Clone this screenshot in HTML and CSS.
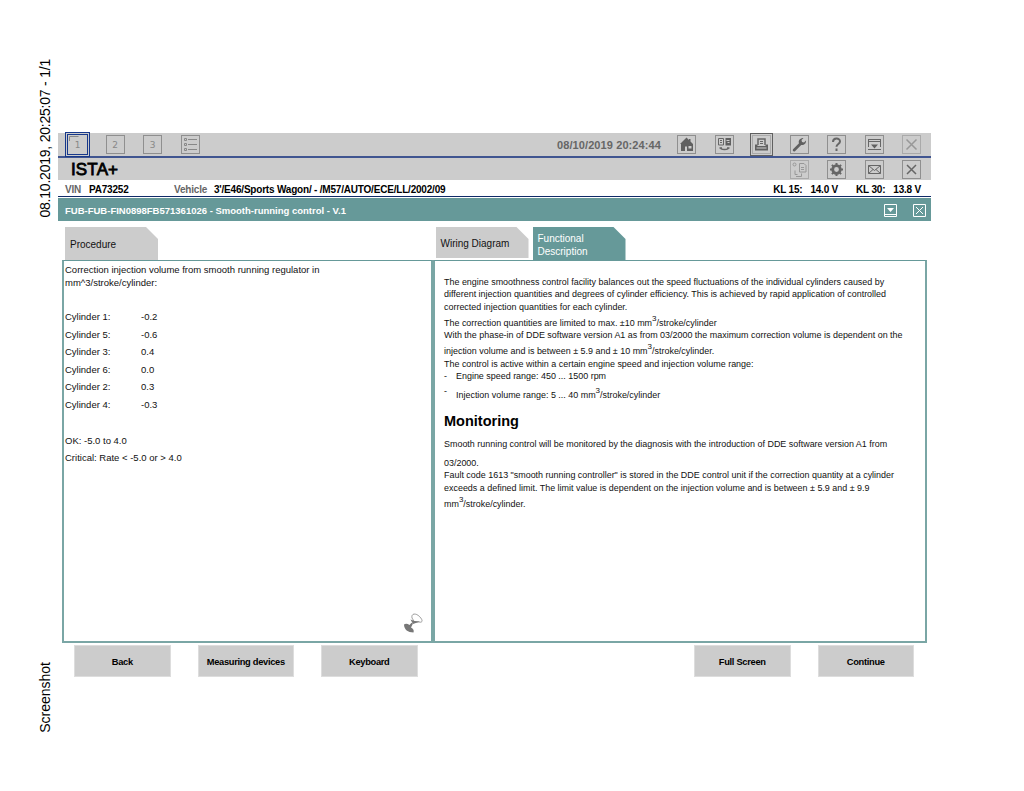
FILE: index.html
```html
<!DOCTYPE html>
<html lang="en">
<head>
  <meta charset="utf-8">
  <title>ISTA+</title>
  <link rel="stylesheet" href="styles.css">
</head>
<body>
  <div class="margin-notes">
    <div class="note note-date">08.10.2019, 20:25:07 - 1/1</div>
    <div class="note note-title">Screenshot</div>
  </div>

  <div class="app">
    <div class="toolbar">
      <div class="icons icons-left">
        <span class="icon selected"><svg viewBox="0 0 19 19"><path d="M2.500 7V2.500h9" /></svg><b>1</b></span>
        <span class="icon">2</span>
        <span class="icon">3</span>
        <span class="icon"><svg viewBox="0 0 19 19"><path d="M7 4.500h9M7 9.500h9M7 14.500h9" /><path d="M3.500 3.500h2v2h-2zM3.500 8.500h2v2h-2zM3.500 13.500h2v2h-2z" /></svg></span>
      </div>
      <div class="clock">08/10/2019 20:24:44</div>
      <div class="icons">
        <span class="icon"><svg viewBox="0 0 19 19"><path class="fill" fill-rule="evenodd" d="M9.500 2.500L3 9h1v7h4v-4.500h2V16h6V9L13.500 6.500V4H12v1zM11.500 11h3v2.500h-3z" /></svg></span>
        <span class="icon"><svg viewBox="0 0 19 19"><path class="fill" d="M10.500 3H16v7.500h-5.500z" /><path d="M3.500 3.500h5v6.500h-5zM5 5.500h2M5 7.500h2" /><path class="light" d="M11.500 5.500h3M12.500 7.500h2" /><path class="thick" d="M5.500 12.500c0 2.700 8 2.700 8 0M4.500 13h2.500M12 13h2.500" /></svg></span>
        <span class="icon framed"><svg viewBox="0 0 19 19"><path class="thick" d="M6 10V4h7v6" /><path d="M8 6.500h3M8 8.500h3" /><path class="fill" fill-rule="evenodd" d="M3 9.500h2.500V11h8V9.500H16V15.500H3zM4.500 12.500h10v1h-10z" /></svg></span>
        <span class="icon"><svg viewBox="0 0 19 19"><path class="fill" d="M3 14.200L9 8.300C8 5.500 10 3 13.500 3L11.500 5l.5 2 2 .5 2-2c.3 3-2 5-4.800 4.500L5 16.200c-1.500.8-2.800-.6-2-2z" /></svg></span>
        <span class="icon"><svg viewBox="0 0 19 19"><path class="heavy" d="M6 7c0-4.500 7-4.500 7-.5 0 2.500-3.500 2.500-3.500 5.300M9.500 13.500V16" /></svg></span>
        <span class="icon"><svg viewBox="0 0 19 19"><path d="M3.500 12V4M15.500 12V4M3 4.500h13M3 6.500h13M3 14.500h13" /><path class="fill" d="M6 9.500h7l-3.500 4z" /></svg></span>
        <span class="icon faded"><svg viewBox="0 0 19 19"><path class="thick" d="M4.500 4.500l10 10M14.500 4.500l-10 10" /></svg></span>
      </div>
    </div>

    <div class="titlebar">
      <h1>ISTA+</h1>
      <div class="icons">
        <span class="icon faded"><svg viewBox="0 0 19 19"><path d="M9.500 3.500H14l2 2V12H9.500zM11 7.500h3M11 9.500h3M5 10.500v4h2.500M6 16.500h5.500V13.500" /><circle cx="4.500" cy="4.500" r="1.500" /></svg></span>
        <span class="icon"><svg viewBox="0 0 19 19"><circle class="gear" cx="9.500" cy="9.500" r="3.800" /><path class="teeth" d="M9.500 3v2.500M9.500 13.500V16M3 9.500h2.500M13.500 9.500H16M4.900 4.900l2 2M12.100 12.100l2 2M4.900 14.100l2-2M12.100 6.900l2-2" /></svg></span>
        <span class="icon"><svg viewBox="0 0 19 19"><path d="M3.500 5.500h12v8h-12zM3.500 5.500l6 5 6-5M3.500 13.500l4.500-4M15.500 13.500l-4.500-4" /></svg></span>
        <span class="icon"><svg viewBox="0 0 19 19"><path class="thick" d="M5 5l9 9M14 5l-9 9" /></svg></span>
      </div>
    </div>

    <div class="vehicle-row">
      <span class="label vin-label">VIN</span>
      <span class="vin">PA73252</span>
      <span class="label vehicle-label">Vehicle</span>
      <span class="vehicle">3'/E46/Sports Wagon/ - /M57/AUTO/ECE/LL/2002/09</span>
      <span class="voltage"><span>KL 15:</span><span>14.0 V</span></span>
      <span class="voltage"><span>KL 30:</span><span>13.8 V</span></span>
    </div>

    <div class="module-bar">
      <span class="module-name">FUB-FUB-FIN0898FB571361026 - Smooth-running control - V.1</span>
      <svg class="window-icon" viewBox="0 0 13 13"><path d="M.5.5h12v12H.5zM1 10.500h11" /><path class="solid" d="M3 4h7L6.500 8z" /></svg>
      <svg class="window-icon" viewBox="0 0 13 13"><path d="M.5.5h12v12H.5zM3 3l7 7M10 3l-7 7" /></svg>
    </div>

    <div class="columns">
      <div class="column column-left">
        <div class="tabs">
          <div class="tab">Procedure</div>
        </div>
        <div class="panel procedure">
          <p>Correction injection volume from smooth running regulator in<br>mm^3/stroke/cylinder:</p>
          <dl>
            <dt>Cylinder 1:</dt><dd>-0.2</dd>
            <dt>Cylinder 5:</dt><dd>-0.6</dd>
            <dt>Cylinder 3:</dt><dd>0.4</dd>
            <dt>Cylinder 6:</dt><dd>0.0</dd>
            <dt>Cylinder 2:</dt><dd>0.3</dd>
            <dt>Cylinder 4:</dt><dd>-0.3</dd>
          </dl>
          <div class="limits">OK: -5.0 to 4.0<br>Critical: Rate &lt; -5.0 or &gt; 4.0</div>
          <svg class="dish" viewBox="0 0 20 20">
            <path class="dish-base" d="M1 11.500c0 5 4 8 9.500 8 .8-2-.2-4-2.500-5l2-4-1.500-.7-2 2.200c-2-1.300-4-1.500-5.500-.5z" />
            <path class="dish-base" d="M7.500 6.500l2.500 4.500L17 8.500l-5.500-.5z" />
            <path class="dish-rim" d="M9 5c-1-5 4-5 7.500-1.500C20 7 20 10 16 9M9 5l2.500 4 4.500 0" />
          </svg>
        </div>
      </div>

      <div class="column column-right">
        <div class="tabs">
          <div class="tab short">Wiring Diagram</div>
          <div class="tab active">Functional<br>Description</div>
        </div>
        <div class="panel description">
          <p>The engine smoothness control facility balances out the speed fluctuations of the individual cylinders caused by</p>
          <p>different injection quantities and degrees of cylinder efficiency. This is achieved by rapid application of controlled</p>
          <p>corrected injection quantities for each cylinder.</p>
          <p class="raised">The correction quantities are limited to max. ±10 mm<sup>3</sup>/stroke/cylinder</p>
          <p>With the phase-in of DDE software version A1 as from 03/2000 the maximum correction volume is dependent on the</p>
          <p class="raised">injection volume and is between ± 5.9 and ± 10 mm<sup>3</sup>/stroke/cylinder.</p>
          <p>The control is active within a certain engine speed and injection volume range:</p>
          <ul>
            <li><span>-</span>Engine speed range: 450 ... 1500 rpm</li>
            <li class="tall"><span>-</span>Injection volume range: 5 ... 40 mm<sup>3</sup>/stroke/cylinder</li>
          </ul>
          <h2>Monitoring</h2>
          <p>Smooth running control will be monitored by the diagnosis with the introduction of DDE software version A1 from</p>
          <p class="spaced">03/2000.</p>
          <p>Fault code 1613 "smooth running controller" is stored in the DDE control unit if the correction quantity at a cylinder</p>
          <p>exceeds a defined limit. The limit value is dependent on the injection volume and is between ± 5.9 and ± 9.9</p>
          <p class="raised">mm<sup>3</sup>/stroke/cylinder.</p>
        </div>
      </div>
    </div>

    <div class="actions">
      <button>Back</button>
      <button>Measuring devices</button>
      <button>Keyboard</button>
      <button class="push">Full Screen</button>
      <button>Continue</button>
    </div>
  </div>
</body>
</html>
```
FILE: styles.css
```css
* {
  box-sizing: border-box;
}

body {
  width: 1024px;
  height: 791px;
  margin: 0;
  display: flex;
  overflow: hidden;
  background: #fff;
  color: #111;
  font-family: "Liberation Sans", Arial, sans-serif;
}

h1, h2, p, ul, dl, dd {
  margin: 0;
  padding: 0;
}

.margin-notes {
  width: 58px;
  padding: 59px 0 58px 38px;
  display: flex;
  flex-direction: column;
  justify-content: space-between;
}

.note {
  writing-mode: vertical-rl;
  transform: rotate(180deg);
  width: 15px;
  color: #000;
  font-size: 14px;
  line-height: 15px;
  white-space: nowrap;
}

.note-date {
  letter-spacing: -.22px;
}

.app {
  width: 873px;
  padding-top: 133px;
}

/* Top bars */
.toolbar,
.titlebar {
  display: flex;
  align-items: center;
  justify-content: flex-end;
  padding-right: 10px;
  background: #ccc;
}

.toolbar {
  height: 25px;
  border-bottom: 2px solid #405590;
}

.titlebar {
  height: 22px;
}

.icons {
  display: flex;
  align-items: center;
  gap: 18.500px;
}

.icons-left {
  margin: 0 auto 0 9px;
}

.icon {
  position: relative;
  width: 19px;
  height: 19px;
  display: flex;
  align-items: center;
  justify-content: center;
  border: 1px solid #8f8f8f;
  color: #888;
  font: 9px "DejaVu Sans", sans-serif;
}

.icon b {
  font-weight: normal;
}

.icon svg {
  position: absolute;
  top: -1px;
  left: -1px;
  width: 19px;
  height: 19px;
  fill: none;
  stroke: #666;
}

.icons-left .icon svg {
  stroke: #888;
}

.icon .fill {
  fill: #606060;
  stroke: none;
}

.icon .light {
  stroke: #ccc;
}

.icon .thick {
  stroke-width: 1.500;
}

.icon .heavy,
.icon .teeth {
  stroke-width: 2;
}

.icon .gear {
  stroke-width: 2.800;
}

.icon.selected {
  outline: 3px double #17388a;
  outline-offset: -1px;
}

.icons-left .icon.selected {
  width: 21px;
  height: 21px;
  margin-right: -1px;
}

.icon.framed {
  outline: 1.500px solid #606060;
  outline-offset: 1px;
  border-color: #aaa;
}

.icon.faded {
  border-color: #aaa;
}

.icon.faded svg {
  opacity: .5;
}

.clock {
  margin-right: 16px;
  color: #666;
  font-size: 11px;
  font-weight: bold;
  letter-spacing: .1px;
}

.titlebar h1 {
  margin: 0 auto 0 13px;
  padding-top: 2px;
  color: #000;
  font-size: 17px;
  line-height: 20px;
  font-weight: normal;
  letter-spacing: .15px;
  -webkit-text-stroke: .8px;
}

.vehicle-row {
  height: 17px;
  padding: 2px 10px 0 7px;
  display: flex;
  align-items: center;
  border-bottom: 1px solid #102a68;
  color: #000;
  font-size: 10px;
  font-weight: bold;
  letter-spacing: -.2px;
  white-space: nowrap;
}

.label {
  color: #666;
}

.vin-label {
  width: 24px;
}

.vin {
  width: 85px;
}

.vehicle-label {
  width: 40px;
}

.vehicle {
  margin-right: auto;
}

.voltage {
  display: flex;
  gap: 8px;
  margin-left: 18px;
}

.module-bar {
  height: 23px;
  margin-top: 1px;
  padding: 1px 5px 0 7px;
  display: flex;
  align-items: center;
  background: #669999;
  color: #fff;
  font-size: 9.500px;
  font-weight: bold;
}

.module-name {
  margin-right: auto;
}

.window-icon {
  width: 13px;
  height: 13px;
  margin-left: 16px;
  fill: none;
  stroke: #fff;
}

.window-icon .solid {
  fill: #fff;
  stroke: none;
}

/* Panels */
.columns {
  display: flex;
  padding: 6px 0 0 4px;
}

.column-left {
  width: 371px;
}

.column-right {
  width: 494px;
}

.tabs {
  height: 33px;
  padding-left: 3px;
  display: flex;
  gap: 4px;
}

.tab {
  width: 93px;
  height: 33px;
  padding: 2px 0 0 5px;
  display: flex;
  align-items: center;
  background: #ccc;
  clip-path: polygon(0 0, 81px 0, 100% 12px, 100% 100%, 0 100%);
  font-size: 10px;
  line-height: 13px;
}

.tab.short {
  height: 31px;
  padding-top: 1px;
}

.tab.active {
  background: #669999;
  color: #fff;
}

.panel {
  position: relative;
  height: 383px;
  border: 2px solid #7aa6a5;
  border-top: 1px solid #669999;
  white-space: nowrap;
}

.procedure {
  padding: 2px 0 0 1px;
  font-size: 9.500px;
  line-height: 13px;
}

.procedure dl {
  display: grid;
  grid-template-columns: 76px 1fr;
  margin-top: 19px;
  line-height: 17.600px;
}

.limits {
  margin-top: 18px;
  line-height: 17.600px;
}

.dish {
  position: absolute;
  right: 8px;
  bottom: 8px;
  width: 20px;
  height: 20px;
}

.dish-base {
  fill: #777;
}

.dish-rim {
  fill: none;
  stroke: #777;
  stroke-width: .7;
}

.column-right .tabs {
  padding-left: 2.500px;
}

.description {
  padding: 15px 0 0 9px;
  font-size: 8.950px;
  line-height: 12.300px;
}

.description p {
  height: 12.300px;
}

.description p.raised {
  height: 16.200px;
  padding-top: 4px;
}

.description p.spaced {
  height: 19px;
  padding-top: 7px;
}

.description li {
  display: block;
  height: 12.300px;
}

.description li span {
  display: inline-block;
  width: 12px;
}

.description li.tall {
  height: 19px;
  padding-top: 7px;
}

.description li.tall span {
  position: relative;
  top: -4px;
}

.description h2 {
  margin: 10px 0 7px;
  color: #000;
  font-size: 14.500px;
  line-height: 20px;
}

sup {
  position: relative;
  top: -5px;
  font-size: 8px;
  line-height: 0;
  vertical-align: baseline;
}

/* Bottom buttons */
.actions {
  display: flex;
  gap: 27px;
  padding: 2px 17px 0 16px;
}

.actions button {
  width: 96.500px;
  height: 32px;
  padding: 1px 0 0;
  border: 1px solid #ddd;
  background: #ccc;
  color: #000;
  font: bold 9.300px "Liberation Sans", Arial, sans-serif;
  letter-spacing: -.3px;
}

.actions .push {
  margin-left: auto;
}
```
